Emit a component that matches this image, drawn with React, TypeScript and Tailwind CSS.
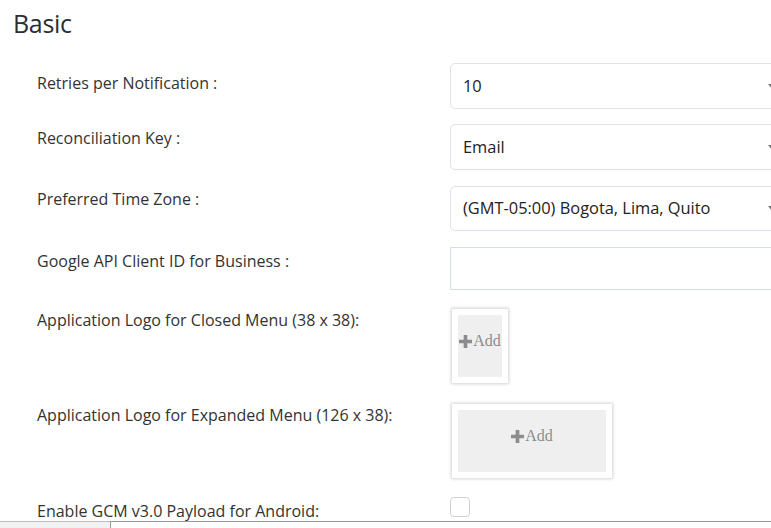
import React from 'react';

const Plus = () => (
  <svg width="13" height="13" viewBox="0 0 12 12" className="mr-[1px] mt-[1px]">
    <path d="M4.3 0h3.4v4.3H12v3.4H7.7V12H4.3V7.7H0V4.3h4.3z" fill="#8c8c8c" />
  </svg>
);

const Caret = () => (
  <svg width="8" height="5" viewBox="0 0 8 5" className="mr-[13px] shrink-0">
    <path d="M0 0h8L4 5z" fill="#777" />
  </svg>
);

function SelectBox({ value, tall = 46 }: { value: string; tall?: number }) {
  return (
    <div
      className="flex shrink-0 items-center w-[340px] border border-[#dfe3e9] rounded-[5px] bg-white pl-[12px] text-[16.4px] text-[#222]"
      style={{ height: tall }}
    >
      <span className="flex-1">{value}</span>
      <Caret />
    </div>
  );
}

function LogoBox({ w, h }: { w: number; h: number }) {
  return (
    <div className="bg-white p-[6px] shadow-[0_0_3px_1px_rgba(0,0,0,0.18)] ml-[2px] mt-[1px]">
      <div
        className="bg-[#efefef] flex items-center justify-center pb-[10px]"
        style={{ width: w, height: h }}
      >
        <span className="flex items-center text-[16px] text-[#8c8c8c] font-['Liberation_Serif',serif]">
          <Plus />
          Add
        </span>
      </div>
    </div>
  );
}

const labelCls = 'w-[450px] shrink-0 pl-[37px] text-[16px] leading-[24px] text-[#333]';

export default function App() {
  return (
    <div className="w-screen h-screen overflow-hidden bg-white font-['Open_Sans',sans-serif] text-[#333] relative">
      <h1 className="text-[25px] leading-[32px] text-[#2a2f33] pl-[13px] pt-[7px] tracking-[-0.3px]">Basic</h1>

      <div className="mt-[24px] flex flex-col">
        <div className="flex h-[61px]">
          <label className={`${labelCls} pt-[8px]`}>Retries per Notification :</label>
          <SelectBox value="10" />
        </div>
        <div className="flex h-[62px]">
          <label className={`${labelCls} pt-[2px]`}>Reconciliation Key :</label>
          <SelectBox value="Email" />
        </div>
        <div className="flex h-[61px]">
          <label className={`${labelCls} pt-[1px]`}>Preferred Time Zone :</label>
          <SelectBox value="(GMT-05:00) Bogota, Lima, Quito" tall={45} />
        </div>
        <div className="flex h-[61px]">
          <label className={`${labelCls} pt-[2px]`}>Google API Client ID for Business :</label>
          <div className="w-[340px] shrink-0 h-[43px] border border-[#d8dee6] bg-white" />
        </div>
        <div className="flex h-[95px]">
          <label className={labelCls}>Application Logo for Closed Menu (38 x 38):</label>
          <div className="shrink-0">
            <LogoBox w={44} h={62} />
          </div>
        </div>
        <div className="flex h-[94px]">
          <label className={labelCls}>Application Logo for Expanded Menu (126 x 38):</label>
          <div className="shrink-0">
            <LogoBox w={148} h={62} />
          </div>
        </div>
        <div className="flex h-[30px]">
          <label className={`${labelCls} pt-[2px]`}>Enable GCM v3.0 Payload for Android:</label>
          <div className="w-[20px] h-[20px] shrink-0 border border-[#d0d0d0] rounded-[4px] bg-white" />
        </div>
      </div>

      <div className="absolute left-0 right-0 top-[521px] h-[7px] flex">
        <div className="w-[110px] h-full bg-[#f2f2f2] border-t border-[#bdbdbd]" />
        <div className="flex-1 h-full bg-white border-t border-l border-[#9a9a9a]" />
      </div>
    </div>
  );
}
